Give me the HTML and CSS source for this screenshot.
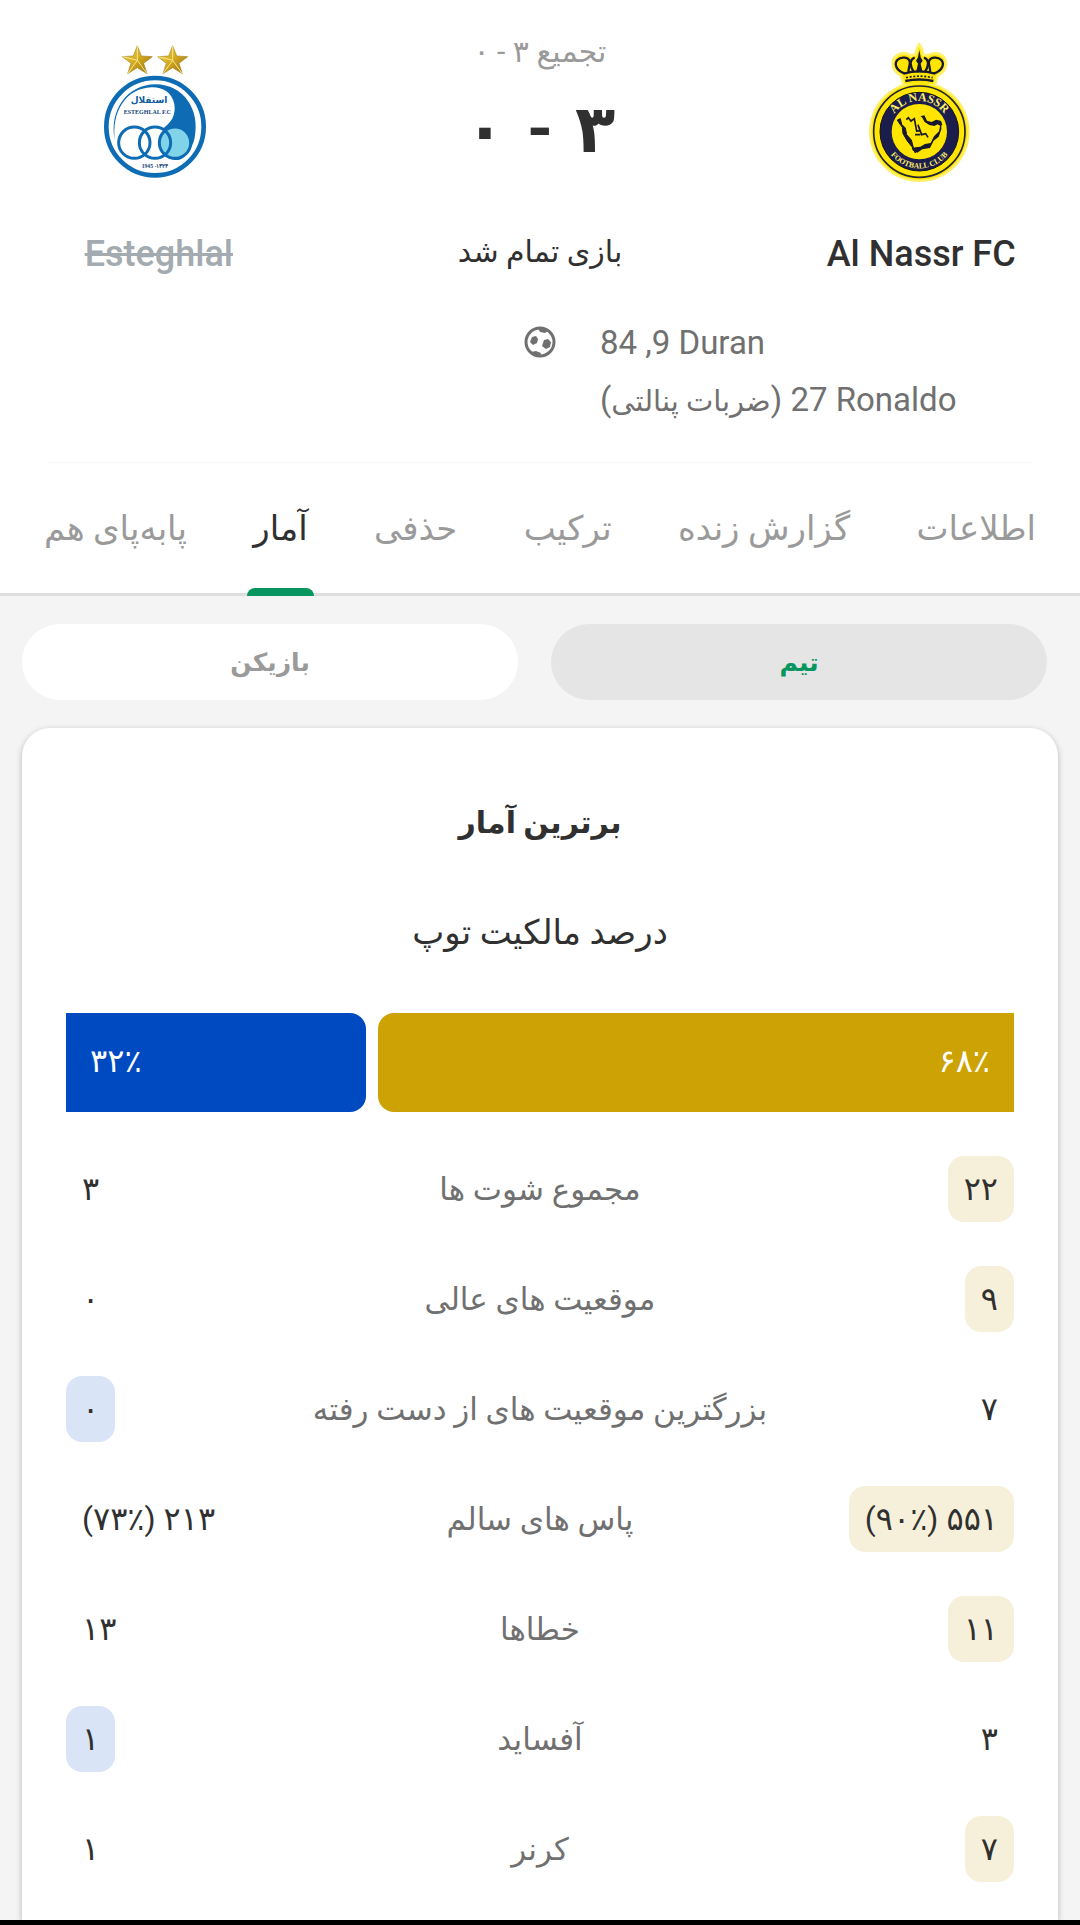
FILE: index.html
```html
<!DOCTYPE html>
<html lang="fa" dir="rtl">
<head>
    <meta charset="UTF-8">
    <meta name="viewport" content="width=device-width, initial-scale=1.0">
    <title>Al Nassr FC - Esteghlal</title>
    <link rel="stylesheet" href="styles.css">
</head>
<body>
    <header class="match">
        <div class="scoreboard">
            <div class="team">
                <svg class="crest" viewBox="0 0 480 480" role="img" aria-label="Al Nassr FC">
                    <defs>
                        <path id="nassr-top" d="M143 305a92 92 0 0 1 184 0"/>
                        <path id="nassr-bottom" d="M125 305a110 110 0 0 0 220 0"/>
                    </defs>
                    <circle cx="235" cy="305" r="151" fill="#fff06a"/>
                    <path d="M188 165l-8-28c-24-12-32-36-19-55 14-16 38-14 50-5l12-3 5-18 7-14 7 14 5 18 12 3c12-9 36-11 50 5 13 19 5 43-19 55l-8 28z" fill="#ffe500" stroke="#fff06a" stroke-width="8" stroke-linejoin="round"/>
                    <circle cx="235" cy="305" r="144" fill="#ffe500"/>
                    <circle cx="235" cy="305" r="137" fill="none" stroke="#222437" stroke-width="5"/>
                    <circle cx="235" cy="305" r="118" fill="#1b1d4d" stroke="#111" stroke-width="3"/>
                    <circle cx="235" cy="305" r="83" fill="#ffe500"/>
                    <g fill="none" stroke="#17182f" stroke-width="7">
                        <path d="M190 130c-25-10-31-28-21-40 12-12 34-8 37 4 3 10-5 17-3 34"/>
                        <path d="M280 130c25-10 31-28 21-40-12-12-34-8-37 4-3 10 5 17 3 34"/>
                        <path d="M218 126c-10-16-15-36 3-43M252 126c10-16 15-36-3-43"/>
                        <path d="M188 131q47-14 94 0M193 153q42-9 84 0"/>
                        <path d="M195 143q40-9 80 0" stroke-width="5" stroke-dasharray="6 5"/>
                    </g>
                    <path d="M235 60l4 22 6 10-6 9 6 26h-20l6-26-6-9 6-10z" fill="#17182f"/>
                    <path d="M169 270l9-4 4 17 11 11 4 20 14 16 6 22 8 9-2 8-7-15-17-21-13-22-2-19-11-15z" fill="#17182f" stroke="#17182f" stroke-width="3"/>
                    <path d="M238 259l12-3 8 16 14 4 13-7 14 3 5 12-6 4-8-5-10 5-15-3-14-9-8-14z" fill="#17182f"/>
                    <path d="M301 272v26l-8 22-15 12-11 22-23 4-15 10-13-6-4-7 12-3 14-2 14-8 17-3 10-20 15-15 4-20z" fill="#17182f"/>
                    <path d="M196 269l6-6 8 10 10-7 7 37 10-1-6-18 11 30 12-3 7 11M222 314h16" fill="none" stroke="#17182f" stroke-width="5"/>
                    <g class="crest-latin" fill="#fff06a" direction="ltr" text-anchor="middle">
                        <text font-size="36"><textPath href="#nassr-top" startOffset="50%">AL NASSR</textPath></text>
                        <text font-size="23"><textPath href="#nassr-bottom" startOffset="50%">FOOTBALL CLUB</textPath></text>
                    </g>
                </svg>
                <h2 class="team-name">Al Nassr FC</h2>
            </div>

            <div class="result">
                <p class="aggregate">تجمیع ۳ - ۰</p>
                <div class="score"><span>۳</span><span>-</span><span>۰</span></div>
                <p class="status">بازی تمام شد</p>
            </div>

            <div class="team">
                <svg class="crest" viewBox="0 0 480 480" role="img" aria-label="Esteghlal">
                    <defs>
                        <linearGradient id="gold" x1="0" y1="0" x2="1" y2="1">
                            <stop offset="0" stop-color="#f2d94c"/>
                            <stop offset="0.5" stop-color="#d4a91f"/>
                            <stop offset="1" stop-color="#8f6a12"/>
                        </linearGradient>
                        <path id="star" d="M0-44L12-13 45-11 19 9 29 40 0 22-29 40-19 9-45-11-12-13z"/>
                    </defs>
                    <g fill="url(#gold)" stroke="#a88425" stroke-width="2">
                        <use href="#star" x="175" y="91"/>
                        <use href="#star" x="281" y="91"/>
                    </g>
                    <path d="M175 47v44l-43-11M175 91l29 40M175 91l-29 40M281 47v44l-43-11M281 91l29 40M281 91l-29 40" fill="none" stroke="#f8e88a" stroke-width="3"/>
                    <circle cx="228" cy="290" r="146" fill="#fff" stroke="#0d6cb4" stroke-width="14"/>
                    <path d="M108 332C88 238 148 163 229 163c86 0 135 78 118 160-6 28-20 49-39 63-12 8-35 3-49-7l-15-78c35-22 47-47 42-79-7-36-37-51-68-50-79 3-121 75-110 160z" fill="#0d6cb4"/>
                    <circle cx="166" cy="338" r="47" fill="#fff"/>
                    <circle cx="228" cy="338" r="47" fill="#fff"/>
                    <circle cx="288" cy="338" r="45" fill="#80d3e8"/>
                    <g fill="none" stroke="#0d6cb4" stroke-width="9">
                        <circle cx="166" cy="338" r="47"/>
                        <circle cx="228" cy="338" r="47"/>
                        <circle cx="288" cy="338" r="47"/>
                    </g>
                    <g fill="#123f78" text-anchor="middle">
                        <text class="crest-persian" x="210" y="220" font-size="27" fill="#0d5c9e">استقلال</text>
                        <text class="crest-latin" x="205" y="251" font-size="18" direction="ltr">ESTEGHLAL F.C</text>
                        <text class="crest-latin" x="228" y="414" font-size="17" direction="ltr">1945 -۱۳۲۴</text>
                    </g>
                </svg>
                <h2 class="team-name eliminated">Esteghlal</h2>
            </div>
        </div>

        <div class="goals">
            <ul class="scorers">
                <li>84 ,9 Duran</li>
                <li>(<bdi>ضربات پنالتی</bdi>) 27 Ronaldo</li>
            </ul>
            <svg class="ball" viewBox="0 0 32 32" aria-hidden="true">
                <circle cx="16" cy="16" r="14" fill="none" stroke="currentColor" stroke-width="3"/>
                <path d="M8 11l4-1 2 3-1 4-4 2-3-3zM20 14l4-1 3 3-1 5-4 2-4-3zM14 2h8l2 3-3 2-5-1zM7 26l5-1 5 2-1 3h-5z" fill="currentColor"/>
            </svg>
        </div>
    </header>

    <nav class="tabs">
        <a href="#info">اطلاعات</a>
        <a href="#live">گزارش زنده</a>
        <a href="#lineup">ترکیب</a>
        <a href="#knockout">حذفی</a>
        <a href="#stats" class="active" aria-current="page">آمار</a>
        <a href="#h2h">پابه‌پای هم</a>
    </nav>

    <main id="stats">
        <div class="switch">
            <button type="button" class="active">تیم</button>
            <button type="button">بازیکن</button>
        </div>

        <section class="card">
            <h1>برترین آمار</h1>
            <h3>درصد مالکیت توپ</h3>
            <div class="possession">
                <div class="home" style="width: 68%">۶۸٪</div>
                <div class="away" style="width: 32%">۳۲٪</div>
            </div>

            <table>
                <tbody>
                    <tr>
                        <td><span class="value best">۲۲</span></td>
                        <th scope="row">مجموع شوت ها</th>
                        <td><span class="value">۳</span></td>
                    </tr>
                    <tr>
                        <td><span class="value best">۹</span></td>
                        <th scope="row">موقعیت های عالی</th>
                        <td><span class="value">۰</span></td>
                    </tr>
                    <tr>
                        <td><span class="value">۷</span></td>
                        <th scope="row">بزرگترین موقعیت های از دست رفته</th>
                        <td><span class="value best">۰</span></td>
                    </tr>
                    <tr>
                        <td><span class="value best">۵۵۱ (۹۰٪)</span></td>
                        <th scope="row">پاس های سالم</th>
                        <td><span class="value">۲۱۳ (۷۳٪)</span></td>
                    </tr>
                    <tr>
                        <td><span class="value best">۱۱</span></td>
                        <th scope="row">خطاها</th>
                        <td><span class="value">۱۳</span></td>
                    </tr>
                    <tr>
                        <td><span class="value">۳</span></td>
                        <th scope="row">آفساید</th>
                        <td><span class="value best">۱</span></td>
                    </tr>
                    <tr>
                        <td><span class="value best">۷</span></td>
                        <th scope="row">کرنر</th>
                        <td><span class="value">۱</span></td>
                    </tr>
                </tbody>
            </table>
        </section>
    </main>
    <footer class="system-bar"></footer>
</body>
</html>
```
FILE: styles.css
```css
* {
    box-sizing: border-box;
    margin: 0;
    padding: 0;
}
body {
    display: flex;
    flex-direction: column;
    min-height: 100vh;
    font-family: Roboto, "Noto Sans", "DejaVu Sans", sans-serif;
    font-size: 32px;
    background-color: #f4f4f4;
    color: #303030;
}

/* match header */
.match {
    background-color: #fff;
    padding-top: 30px;
}
.scoreboard {
    display: grid;
    grid-template-columns: 5fr 7fr 5fr;
    text-align: center;
}
.team {
    display: flex;
    flex-direction: column;
    align-items: center;
    gap: 42px;
}
.crest {
    width: 160px;
    height: 160px;
}
.crest-latin {
    font-family: "Liberation Serif", serif;
    font-weight: bold;
}
.crest-persian {
    font-family: "DejaVu Sans", sans-serif;
    font-weight: bold;
}
.team-name {
    font-size: 36px;
    font-weight: 500;
    line-height: 44px;
}
.eliminated {
    color: #a3abb0;
    text-decoration: line-through;
}
.aggregate {
    font-size: 30px;
    line-height: 44px;
    color: #9a9a9a;
}
.score {
    display: flex;
    justify-content: center;
    gap: 22px;
    font-size: 66px;
    font-weight: bold;
    line-height: 112px;
}
.status {
    margin-top: 44px;
    font-size: 30px;
    line-height: 44px;
}
.goals {
    display: grid;
    grid-template-columns: 1fr 32px 1fr;
    column-gap: 44px;
    margin: 38px 48px 0;
    padding-bottom: 32px;
    border-bottom: 1px solid #f8f8f8;
    color: #707070;
}
.scorers {
    direction: ltr;
    list-style: none;
    font-size: 33px;
    line-height: 57px;
}
.scorers bdi {
    font-size: 29px;
}
.ball {
    width: 32px;
    height: 32px;
    margin-top: 12px;
}

/* tabs */
.tabs {
    display: flex;
    justify-content: space-between;
    padding: 0 44px;
    background-color: #fff;
    border-bottom: 3px solid #dedede;
}
.tabs a {
    position: relative;
    font-size: 34px;
    line-height: 130px;
    color: #9a9a9a;
    text-decoration: none;
}
.tabs .active {
    color: #303030;
}
.tabs .active::after {
    content: "";
    position: absolute;
    right: -6px;
    bottom: -3px;
    left: -6px;
    height: 8px;
    border-radius: 8px 8px 0 0;
    background-color: #07965f;
}

main {
    display: flex;
    flex: 1;
    flex-direction: column;
}
.switch {
    display: flex;
    gap: 33px;
    padding: 28px 33px 28px 22px;
}
.switch button {
    flex: 1;
    height: 76px;
    border: none;
    border-radius: 38px;
    background-color: #fff;
    color: #9a9a9a;
    font-family: inherit;
    font-size: 25px;
    font-weight: bold;
    cursor: pointer;
}
.switch .active {
    background-color: #e5e5e5;
    color: #07965f;
}

/* statistics */
.card {
    flex: 1;
    margin: 0 22px;
    padding: 67px 44px 14px;
    border-radius: 28px 28px 0 0;
    background-color: #fff;
    box-shadow: 0 2px 6px rgba(0, 0, 0, 0.25);
    text-align: center;
}
.card h1 {
    font-size: 30px;
    line-height: 56px;
}
.card h3 {
    margin: 53px 0;
    font-size: 34px;
    font-weight: normal;
    line-height: 56px;
}
.possession {
    display: flex;
    gap: 12px;
    height: 99px;
    margin-bottom: 22px;
    line-height: 96px;
    color: #fff;
}
.home {
    padding-right: 24px;
    border-radius: 16px 0 0 16px;
    background-color: #cda204;
    text-align: right;
}
.away {
    padding-left: 24px;
    border-radius: 0 16px 16px 0;
    background-color: #004ac1;
    text-align: left;
}
table {
    width: 100%;
    border-collapse: collapse;
}
td {
    width: 25%;
    height: 110px;
    text-align: right;
}
td:last-child {
    text-align: left;
}
th {
    font-size: 31px;
    font-weight: normal;
    color: #707070;
}
.value {
    display: inline-block;
    padding: 0 16px;
    border-radius: 16px;
    line-height: 66px;
}
.best {
    background-color: #f6f0da;
}
td:last-child .best {
    background-color: #d9e4f6;
}
.system-bar {
    height: 5px;
    background-color: #000;
}
```
